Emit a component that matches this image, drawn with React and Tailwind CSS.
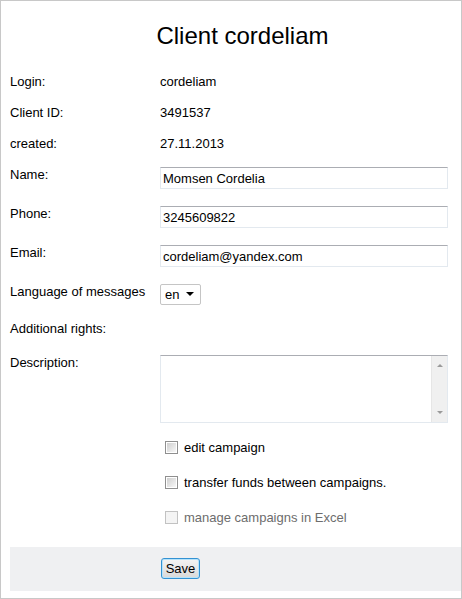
import React, { useState } from "react";

const client = {
  login: "cordeliam",
  id: "3491537",
  created: "27.11.2013",
};

const Checkbox = ({ label, disabled }) => (
  <label className="flex items-center h-[15px] leading-[15px]">
    <span
      className={
        disabled
          ? "w-[13px] h-[13px] ml-[5px] border border-[#c2c2c2] bg-[#f4f4f4]"
          : "w-[13px] h-[13px] ml-[5px] border border-[#8f8f8f] bg-white p-[1px]"
      }
    >
      {!disabled && (
        <span className="block w-full h-full bg-gradient-to-br from-[#cfcfcf] to-[#f7f7f7]" />
      )}
    </span>
    <span className={disabled ? "ml-[6px] text-[#6d6d6d]" : "ml-[6px]"}>
      {label}
    </span>
  </label>
);

const TextInput = ({ value, onChange }) => (
  <input
    value={value}
    onChange={(e) => onChange(e.target.value)}
    className="w-[288px] h-[22px] px-[2px] border border-[#e3e9ef] border-t-[#abadb3] outline-none text-[13px] text-black bg-white"
  />
);

const App = () => {
  const [name, setName] = useState("Momsen Cordelia");
  const [phone, setPhone] = useState("3245609822");
  const [email, setEmail] = useState("cordeliam@yandex.com");

  return (
    <div className="w-[462px] h-[599px] border border-[#c8c8c8] bg-white text-black text-[13px] font-['Liberation_Sans',Arial,sans-serif]">
      {/* TITLE */}
      <h1 className="mt-[21px] pl-[23px] text-center text-[24px] leading-[28px] font-normal">
        Client cordeliam
      </h1>

      <div className="pl-[9px] mt-[24px]">
        {/* STATIC ROWS */}
        <div className="grid grid-cols-[150px_1fr] auto-rows-[31px] leading-[15px]">
          <span>Login:</span>
          <span>{client.login}</span>
          <span>Client ID:</span>
          <span>{client.id}</span>
          <span>created:</span>
          <span>{client.created}</span>
        </div>

        {/* INPUT ROWS */}
        <div className="grid grid-cols-[150px_1fr] auto-rows-[39px] leading-[15px]">
          <span>Name:</span>
          <div>
            <TextInput value={name} onChange={setName} />
          </div>
          <span>Phone:</span>
          <div>
            <TextInput value={phone} onChange={setPhone} />
          </div>
          <span>Email:</span>
          <div>
            <TextInput value={email} onChange={setEmail} />
          </div>
          <span>Language of messages</span>
          <div>
            <div className="relative w-[41px] h-[21px]">
              <select className="appearance-none w-full h-full pl-[4px] border border-[#c5c5c5] rounded-[2px] bg-white text-[13px] outline-none">
                <option>en</option>
                <option>ru</option>
              </select>
              <span className="absolute right-[7px] top-[8px] w-0 h-0 border-l-[4px] border-r-[4px] border-t-[4px] border-l-transparent border-r-transparent border-t-black pointer-events-none" />
            </div>
          </div>
        </div>

        <div className="mt-[-2px] h-[34px] leading-[15px]">Additional rights:</div>

        {/* DESCRIPTION */}
        <div className="grid grid-cols-[150px_1fr] leading-[15px]">
          <span>Description:</span>
          <div className="flex w-[288px] h-[68px] border border-[#e3e9ef] border-t-[#abadb3] bg-white">
            <textarea className="flex-1 resize-none outline-none p-[2px] text-[13px]" />
            <div className="w-[16px] flex flex-col justify-between items-center py-[8px] bg-[#f0f0f0] border-l border-[#e6e6e6]">
              <span className="w-0 h-0 border-l-[3px] border-r-[3px] border-b-[3px] border-l-transparent border-r-transparent border-b-[#9a9a9a]" />
              <span className="w-0 h-0 border-l-[3px] border-r-[3px] border-t-[3px] border-l-transparent border-r-transparent border-t-[#9a9a9a]" />
            </div>
          </div>
        </div>

        {/* RIGHTS */}
        <div className="pl-[150px] mt-[17px] flex flex-col gap-[20px]">
          <Checkbox label="edit campaign" />
          <Checkbox label="transfer funds between campaigns." />
          <Checkbox label="manage campaigns in Excel" disabled />
        </div>

        {/* FOOTER */}
        <div className="mt-[22px] h-[44px] bg-[#eff0f2] pl-[151px] pt-[11px]">
          <button className="h-[21px] w-[39px] rounded-[3px] border border-[#3392d3] bg-gradient-to-b from-[#f4f4f4] to-[#d9d9d9] shadow-[inset_0_0_0_1px_#b6e3fb] text-[13px] leading-[17px]">
            Save
          </button>
        </div>
      </div>
    </div>
  );
};

export default App;
